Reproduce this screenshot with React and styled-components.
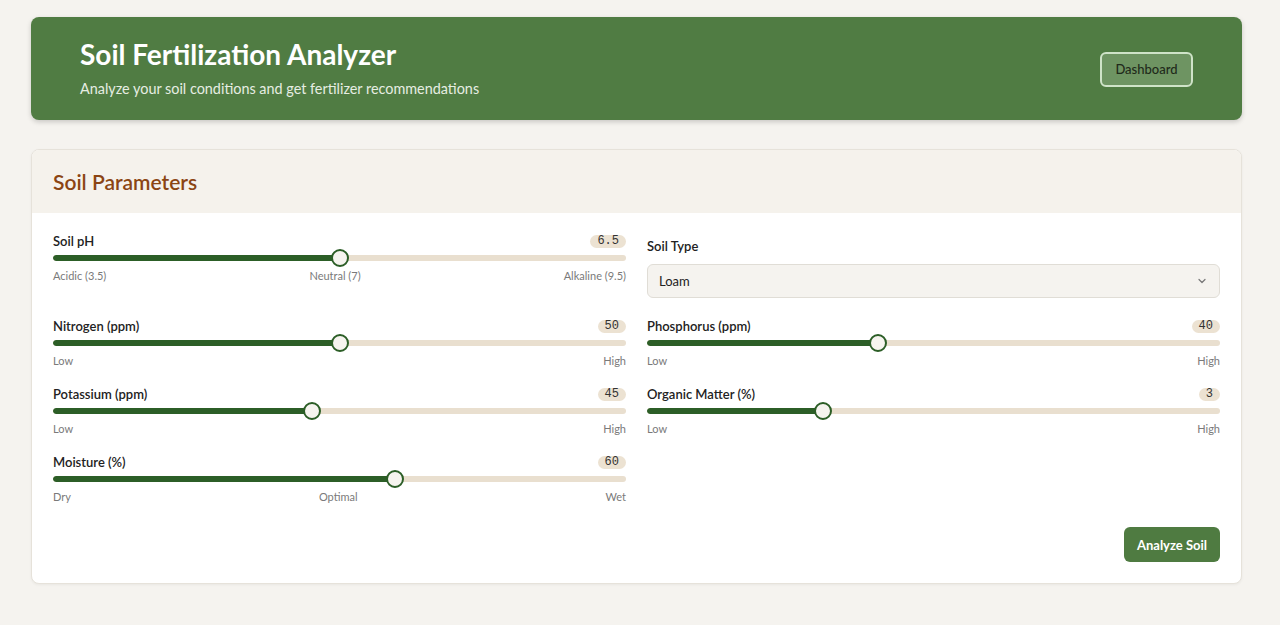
import React from "react";
import styled, { createGlobalStyle } from "styled-components";

const Global = createGlobalStyle`
  html, body { margin: 0; padding: 0; background: #f5f3ef; }
  body { font-family: "Lato", "Noto Sans", sans-serif; color: #222; }
  * { box-sizing: border-box; }
`;

const Page = styled.div`
  padding: 17px 0 40px 31px;
`;

const Container = styled.div`
  width: 1211px;
  display: flex;
  flex-direction: column;
  gap: 29px;
`;

const Header = styled.header`
  background: #507c43;
  border-radius: 8px;
  box-shadow: 0 2px 5px rgba(0, 0, 0, 0.18);
  height: 103px;
  padding: 0 49px;
  display: flex;
  align-items: center;
  justify-content: space-between;
`;

const TitleBlock = styled.div`
  display: flex;
  flex-direction: column;
  gap: 10px;
  margin-top: -2px;
`;

const Title = styled.h1`
  margin: 0;
  font-size: 28px;
  font-weight: 700;
  color: #fff;
  line-height: 32px;
`;

const Subtitle = styled.p`
  margin: 0;
  font-size: 14.4px;
  color: #e6ede2;
  line-height: 18px;
`;

const DashButton = styled.button`
  font-family: inherit;
  font-size: 13px;
  font-weight: 500;
  color: #1f2a1a;
  background: #6e9462;
  border: 2px solid #cfe3c8;
  border-radius: 6px;
  width: 93px;
  height: 35px;
  margin-top: 1px;
`;

const Card = styled.section`
  background: #fff;
  border: 1px solid #e6e2da;
  border-radius: 8px;
  box-shadow: 0 1px 3px rgba(0, 0, 0, 0.05);
  overflow: hidden;
`;

const CardHeader = styled.div`
  background: #f5f2ec;
  height: 63px;
  padding: 0 21px;
  display: flex;
  align-items: center;
`;

const CardTitle = styled.h2`
  margin: 0;
  font-size: 21px;
  font-weight: 600;
  color: #8b4513;
`;

const CardBody = styled.div`
  padding: 20px 21px 21px 21px;
  display: flex;
  flex-direction: column;
`;

const Grid = styled.div`
  display: grid;
  grid-template-columns: 1fr 1fr;
  column-gap: 21px;
  row-gap: 18px;
  align-items: start;
`;

const Field = styled.div`
  display: flex;
  flex-direction: column;
  padding-top: ${(p) => p.$offset || 0}px;
  padding-bottom: ${(p) => p.$bottom || 0}px;
`;

const FieldHead = styled.div`
  display: flex;
  justify-content: space-between;
  align-items: center;
  height: 16px;
`;

const Label = styled.label`
  font-size: 13px;
  font-weight: 600;
  color: #222;
`;

const Badge = styled.span`
  font-family: "Liberation Mono", "DejaVu Sans Mono", monospace;
  font-size: 12px;
  background: #ece2d2;
  color: #333;
  border-radius: 7px;
  padding: 0 7px;
  line-height: 13px;
`;

const SliderWrap = styled.div`
  position: relative;
  height: 18px;
  display: flex;
  align-items: center;
`;

const Track = styled.div`
  width: 100%;
  height: 6px;
  border-radius: 3px;
  background: #e9dfcf;
  overflow: hidden;
`;

const Fill = styled.div`
  height: 100%;
  background: #2c5e27;
  border-radius: 3px;
`;

const Thumb = styled.div`
  position: absolute;
  top: 0;
  width: 18px;
  height: 18px;
  border-radius: 50%;
  background: #f6f4ef;
  border: 2px solid #2c5e27;
  margin-left: -9px;
`;

const Range = styled.div`
  display: flex;
  justify-content: space-between;
  font-size: 11px;
  color: #7a7a7a;
  margin-top: 1px;
  line-height: 15px;
`;

const SelectBox = styled.div`
  margin-top: 10px;
  height: 34px;
  background: #f5f3ef;
  border: 1px solid #e0ddd6;
  border-radius: 6px;
  padding: 0 12px 0 11px;
  display: flex;
  align-items: center;
  justify-content: space-between;
  font-size: 13px;
  color: #222;
`;

const Footer = styled.div`
  display: flex;
  justify-content: flex-end;
  margin-top: 23px;
`;

const AnalyzeButton = styled.button`
  font-family: inherit;
  font-size: 13px;
  font-weight: 700;
  color: #fff;
  background: #4f7b41;
  border: none;
  border-radius: 6px;
  width: 96px;
  height: 35px;
`;

function Slider({ label, value, min, max, ticks }) {
  const pct = ((value - min) / (max - min)) * 100;
  return (
    <Field>
      <FieldHead>
        <Label>{label}</Label>
        <Badge>{value}</Badge>
      </FieldHead>
      <SliderWrap>
        <Track>
          <Fill style={{ width: `calc(9px + (100% - 18px) * ${pct / 100})` }} />
        </Track>
        <Thumb style={{ left: `calc(9px + (100% - 18px) * ${pct / 100})` }} />
      </SliderWrap>
      <Range>
        {ticks.map((t) => (
          <span key={t}>{t}</span>
        ))}
      </Range>
    </Field>
  );
}

export default function App() {
  return (
    <>
      <Global />
      <Page>
        <Container>
          <Header>
            <TitleBlock>
              <Title>Soil Fertilization Analyzer</Title>
              <Subtitle>Analyze your soil conditions and get fertilizer recommendations</Subtitle>
            </TitleBlock>
            <DashButton>Dashboard</DashButton>
          </Header>
          <Card>
            <CardHeader>
              <CardTitle>Soil Parameters</CardTitle>
            </CardHeader>
            <CardBody>
              <Grid>
                <Slider label="Soil pH" value="6.5" min={3.5} max={9.5} ticks={["Acidic (3.5)", "Neutral (7)", "Alkaline (9.5)"]} />
                <Field $offset={5} $bottom={2}>
                  <FieldHead>
                    <Label>Soil Type</Label>
                  </FieldHead>
                  <SelectBox>
                    <span>Loam</span>
                    <svg width="10" height="10" viewBox="0 0 10 10" fill="none">
                      <path d="M2 3.5 L5 6.5 L8 3.5" stroke="#777" strokeWidth="1.2" strokeLinecap="round" strokeLinejoin="round" />
                    </svg>
                  </SelectBox>
                </Field>
                <Slider label="Nitrogen (ppm)" value="50" min={0} max={100} ticks={["Low", "High"]} />
                <Slider label="Phosphorus (ppm)" value="40" min={0} max={100} ticks={["Low", "High"]} />
                <Slider label="Potassium (ppm)" value="45" min={0} max={100} ticks={["Low", "High"]} />
                <Slider label="Organic Matter (%)" value="3" min={0} max={10} ticks={["Low", "High"]} />
                <Slider label="Moisture (%)" value="60" min={0} max={100} ticks={["Dry", "Optimal", "Wet"]} />
              </Grid>
              <Footer>
                <AnalyzeButton>Analyze Soil</AnalyzeButton>
              </Footer>
            </CardBody>
          </Card>
        </Container>
      </Page>
    </>
  );
}
